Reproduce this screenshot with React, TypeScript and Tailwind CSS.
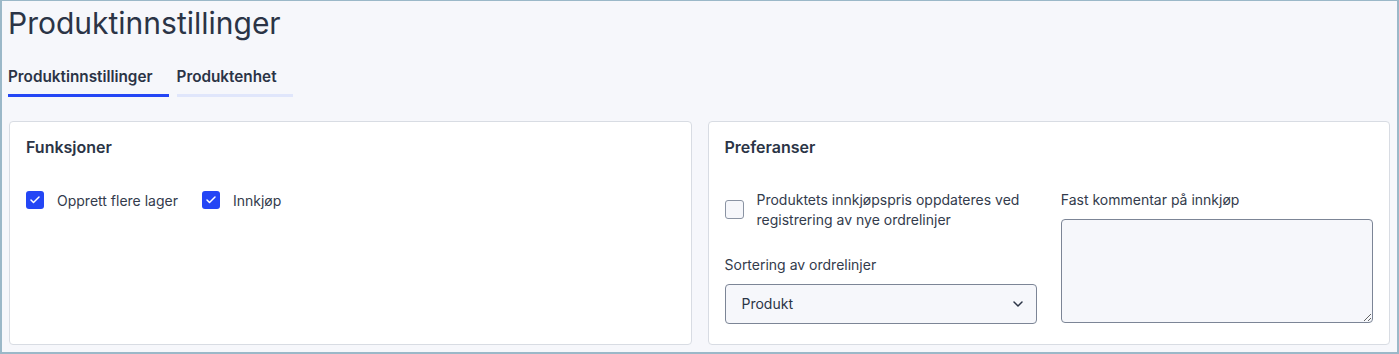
import { Check, ChevronDown } from "lucide-react";

function Checkbox({ checked }: { checked: boolean }) {
  return checked ? (
    <span className="flex h-[18px] w-[18px] shrink-0 items-center justify-center rounded-[3px] bg-[#2446f5]">
      <Check size={12} strokeWidth={3} className="text-white" />
    </span>
  ) : (
    <span className="h-[19px] w-[19px] shrink-0 rounded-[3px] border border-[#8a93a3] bg-[#f6f7fb]" />
  );
}

export default function App() {
  return (
    <div
      className="h-[354px] overflow-hidden border-t border-l-2 border-r-2 border-b-2 border-[#9bb8c8] bg-[#f6f7fb] text-[#2b3446]"
      style={{ fontFamily: "Inter, 'Noto Sans', sans-serif" }}
    >
      <h1 className="pl-[6px] pt-[3px] text-[30px] leading-[38px] font-normal">Produktinnstillinger</h1>

      {/* tabs */}
      <div className="mt-[24px] flex gap-2 pl-[6px]">
        <div className="border-b-[3px] border-[#2446f5] pb-[5px] pr-4 text-[15.3px] font-semibold">Produktinnstillinger</div>
        <div className="border-b-[3px] border-[#e0e6fb] pb-[5px] pr-4 text-[15.3px] font-semibold">Produktenhet</div>
      </div>

      <div className="mt-[24px] grid grid-cols-2 gap-4 pl-[7px] pr-[7px]">
        {/* Funksjoner */}
        <section className="h-[224px] rounded border border-[#d8dce3] bg-white px-[16px] pt-[13px]">
          <h3 className="text-[16px] font-semibold">Funksjoner</h3>
          <div className="mt-[31px] flex items-center gap-[24px] text-[14px] text-[#333b4c]">
            <label className="flex items-center gap-[13px]">
              <Checkbox checked />
              Opprett flere lager
            </label>
            <label className="flex items-center gap-[13px]">
              <Checkbox checked />
              Innkjøp
            </label>
          </div>
        </section>

        {/* Preferanser */}
        <section className="h-[224px] rounded border border-[#d8dce3] bg-white px-[16px] pt-[13px]">
          <h3 className="text-[16px] font-semibold">Preferanser</h3>
          <div className="mt-[31px] grid grid-cols-2 gap-6 text-[14px] text-[#333b4c]">
            <div>
              <label className="flex items-center gap-[13px] leading-5">
                <Checkbox checked={false} />
                <span>
                  Produktets innkjøpspris oppdateres ved
                  <br />
                  registrering av nye ordrelinjer
                </span>
              </label>
              <div className="mt-[25px] leading-5">Sortering av ordrelinjer</div>
              <div className="mt-[9px] flex h-[40px] items-center justify-between rounded border border-[#7c8596] bg-[#f6f7fb] pl-4 pr-[10px] text-[14px] text-[#2b3446]">
                Produkt
                <ChevronDown size={16} strokeWidth={2.2} className="text-[#2b3446]" />
              </div>
            </div>
            <div>
              <div className="leading-5">Fast kommentar på innkjøp</div>
              <textarea className="mt-[9px] block h-[104px] w-full resize-y rounded border border-[#7c8596] bg-[#f6f7fb]" />
            </div>
          </div>
        </section>
      </div>
    </div>
  );
}
